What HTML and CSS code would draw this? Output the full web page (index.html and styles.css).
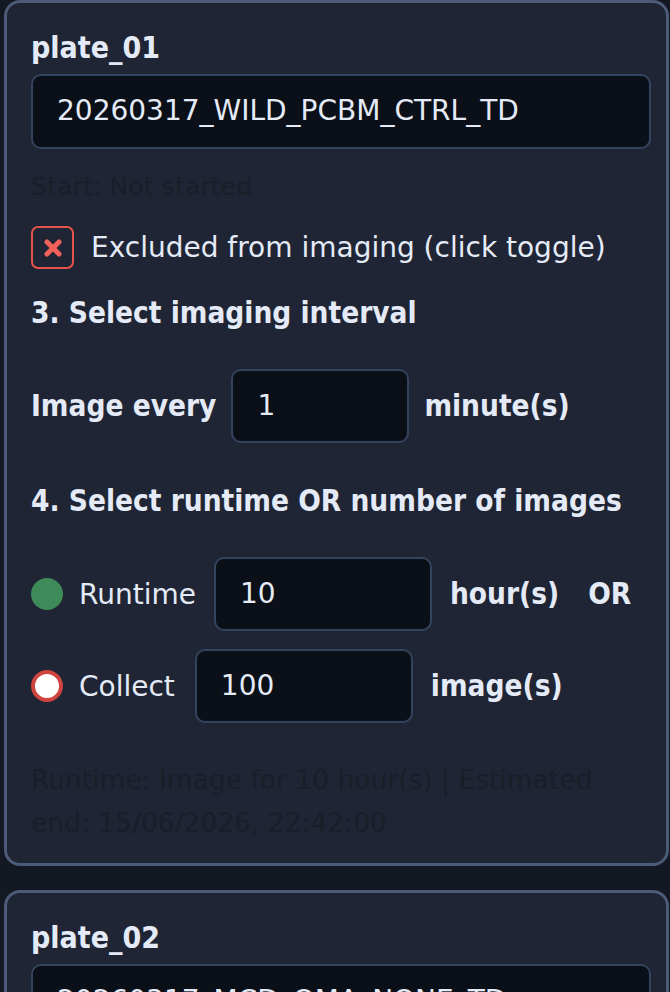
FILE: index.html
```html
<!DOCTYPE html>
<html>
<head>
<meta charset="utf-8">
<link rel="stylesheet" href="styles.css">
</head>
<body>
<div class="list">
  <section class="card">
    <div class="plate-name">plate_01</div>
    <div class="field wide">20260317_WILD_PCBM_CTRL_TD</div>
    <div class="faint start">Start: Not started</div>
    <div class="toggle-row">
      <span class="xbox"><svg width="20" height="20" viewBox="0 0 20 20"><path d="M4 4 L16 16 M16 4 L4 16" stroke="#f0625a" stroke-width="5" stroke-linecap="round"/></svg></span>
      <span class="regular">Excluded from imaging (click toggle)</span>
    </div>
    <div class="heading h3">3. Select imaging interval</div>
    <div class="row interval">
      <span class="bold">Image every</span>
      <div class="field num w178">1</div>
      <span class="bold">minute(s)</span>
    </div>
    <div class="heading h4">4. Select runtime OR number of images</div>
    <div class="row runtime">
      <span class="dot on"></span>
      <span class="regular">Runtime</span>
      <div class="field num w218">10</div>
      <span class="bold">hour(s)</span>
      <span class="bold or">OR</span>
    </div>
    <div class="row collect">
      <span class="dot off"></span>
      <span class="regular">Collect</span>
      <div class="field num w218">100</div>
      <span class="bold">image(s)</span>
    </div>
    <div class="faint summary">Runtime: Image for 10 hour(s) | Estimated end: 15/06/2026, 22:42:00</div>
  </section>
  <section class="card">
    <div class="plate-name">plate_02</div>
    <div class="field wide">20260317_MCD_OMA_NONE_TD</div>
  </section>
</div>
</body>
</html>
```
FILE: styles.css
```css
* { box-sizing: border-box; }
html, body { margin: 0; padding: 0; }
body {
  background: #131822;
  color: #e4ebf7;
  font-family: "DejaVu Sans", sans-serif;
  font-size: 28px;
  width: 670px;
  height: 992px;
  overflow: hidden;
}
.list {
  display: flex;
  flex-direction: column;
  gap: 24px;
  padding-left: 4px;
}
.card {
  width: 665px;
  background: #1f2534;
  border: 3px solid #4b5b78;
  border-radius: 16px;
  padding: 27px 15px 19px 24px;
  display: flex;
  flex-direction: column;
}
.plate-name,
.heading,
.bold {
  font-family: "DejaVu Sans Condensed", "DejaVu Sans", sans-serif;
  font-stretch: condensed;
  font-weight: bold;
  font-size: 29.5px;
}
.plate-name { line-height: 36px; font-size: 30px; }
.field {
  background: #0b0f17;
  border: 2px solid #34435e;
  border-radius: 10px;
  color: #e4ebf7;
  line-height: 34px;
  padding: 18px 24px;
  white-space: nowrap;
  overflow: hidden;
}
.field.wide { margin-top: 8px; width: 620px; height: 75px; }
.field.num { height: 74px; }
.w178 { width: 178px; }
.w218 { width: 218px; }
.faint { color: #191e29; font-size: 25.3px; }
.start { margin-top: 23px; line-height: 30px; }
.toggle-row {
  margin-top: 24px;
  display: flex;
  align-items: center;
  gap: 17px;
}
.xbox {
  width: 43px;
  height: 43px;
  border: 2px solid #e5534b;
  border-radius: 7px;
  display: flex;
  align-items: center;
  justify-content: center;
}
.heading { line-height: 34px; }
.h3 { margin-top: 27px; }
.h4 { margin-top: 41px; }
.row {
  display: flex;
  align-items: center;
  gap: 18px;
}
.interval { margin-top: 39px; gap: 15px; }
.runtime { margin-top: 39px; }
.collect { margin-top: 18px; }
.collect .field { margin-left: 2px; }
.or { margin-left: 11px; }
.dot {
  width: 32px;
  height: 32px;
  border-radius: 50%;
  flex: none;
}
.dot.on { background: #3e8a58; }
.dot.off { background: #ffffff; border: 4px solid #d0443f; }
.runtime .regular, .collect .regular { margin-left: -2px; }
.summary {
  margin-top: 35px;
  font-size: 26.5px;
  line-height: 43px;
  max-width: 605px;
}
```
